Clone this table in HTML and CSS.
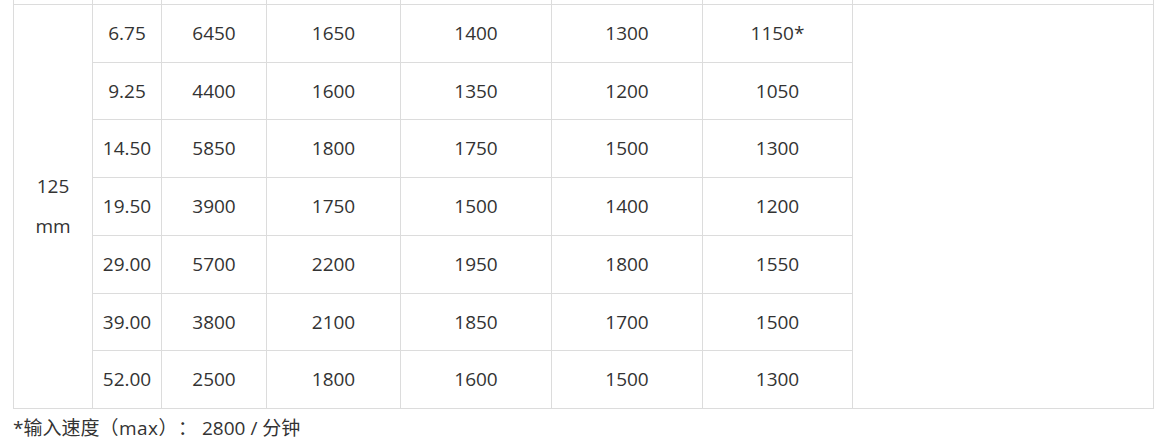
FILE: index.html
```html
<!DOCTYPE html>
<html lang="zh-CN">
<head>
<meta charset="utf-8">
<title>Table</title>
<link rel="stylesheet" href="styles.css">
</head>
<body>
<div class="viewport">
  <table class="spec">
    <colgroup>
      <col class="c1"><col class="c2"><col class="c3"><col class="c4"><col class="c5"><col class="c6"><col class="c7"><col class="c8">
    </colgroup>
    <tbody>
      <tr class="prev"><td></td><td></td><td></td><td></td><td></td><td></td><td></td><td></td></tr>
      <tr><td rowspan="7">125<br>mm</td><td>6.75</td><td>6450</td><td>1650</td><td>1400</td><td>1300</td><td>1150*</td><td rowspan="7"></td></tr>
      <tr><td>9.25</td><td>4400</td><td>1600</td><td>1350</td><td>1200</td><td>1050</td></tr>
      <tr><td>14.50</td><td>5850</td><td>1800</td><td>1750</td><td>1500</td><td>1300</td></tr>
      <tr><td>19.50</td><td>3900</td><td>1750</td><td>1500</td><td>1400</td><td>1200</td></tr>
      <tr><td>29.00</td><td>5700</td><td>2200</td><td>1950</td><td>1800</td><td>1550</td></tr>
      <tr><td>39.00</td><td>3800</td><td>2100</td><td>1850</td><td>1700</td><td>1500</td></tr>
      <tr><td>52.00</td><td>2500</td><td>1800</td><td>1600</td><td>1500</td><td>1300</td></tr>
    </tbody>
  </table>
  <p class="note">*输入速度<span class="paren">（max）</span>： 2800 / 分钟</p>
</div>
</body>
</html>
```
FILE: styles.css
```css
html, body {
  margin: 0;
  padding: 0;
  background: #fff;
}
body {
  font-family: "Open Sans", "Noto Sans CJK SC", sans-serif;
  font-size: 19px;
  color: #333;
  overflow: hidden;
  text-spacing-trim: space-all;
}
.viewport {
  padding-left: 13px;
}
.spec {
  border-collapse: collapse;
  table-layout: fixed;
  width: 1141px;
  margin-top: -53.7px;
}
.spec td {
  border: 1px solid #dcdcdc;
  text-align: center;
  vertical-align: middle;
  padding: 8px 4px;
  line-height: 40.7px;
  height: 40.7px;
}
.c1 { width: 79px; }
.c2 { width: 69px; }
.c3 { width: 105px; }
.c4 { width: 134px; }
.c5 { width: 151px; }
.c6 { width: 151px; }
.c7 { width: 150px; }
.c8 { width: 301px; }
.note {
  margin: 0;
  padding-top: 8px;
  line-height: 22px;
}
.paren {
  letter-spacing: 0.5px;
}
```
